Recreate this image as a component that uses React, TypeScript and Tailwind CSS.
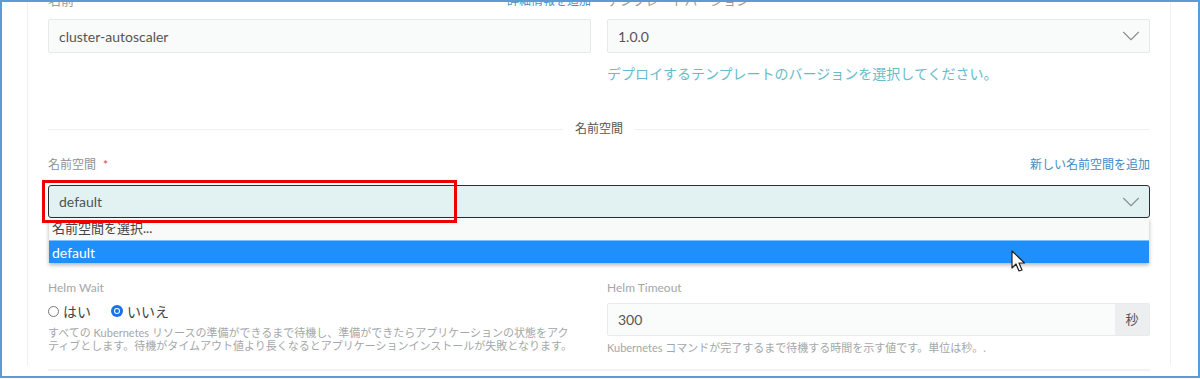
import { ChevronDown } from "lucide-react";

const font = { fontFamily: "Lato, 'Noto Sans CJK JP', sans-serif" };

function Chevron() {
  return <ChevronDown className="w-[30px] h-[30px] -mr-[7px] text-[#8a8f93]" strokeWidth={0.9} />;
}

function Cursor() {
  return (
    <svg width="16" height="24" viewBox="0 0 16 24" className="absolute z-30 left-[1011px] top-[250px]">
      <path d="M1 1 L1 18 L5 14 L8 21 L11 20 L8 13 L13.5 13 Z" fill="#fff" stroke="#222" strokeWidth="1.2" strokeLinejoin="round" />
    </svg>
  );
}

export default function App() {
  return (
    <div style={font} className="relative w-[1200px] h-[379px] overflow-hidden bg-white">
      <div className="h-[378px] border-2 border-[#5b9bd8] overflow-hidden">
        <div className="ml-[25px] mr-[27px] h-full border-l border-r border-[#eef0f1] px-[20px]">
          <div className="-mt-[11px] grid grid-cols-2 gap-4">
            {/* left column */}
            <div>
              <div className="flex justify-between items-center h-5 mb-2">
                <span className="text-[13px] text-[#9a9ea1]">名前</span>
                <span className="text-[12px] text-[#4a8fc4]">詳細情報を追加</span>
              </div>
              <div className="h-[34px] flex items-center px-[10px] bg-[#f9fafa] border border-[#e6e9ea] rounded-[2px] text-[14px] text-[#555]">
                cluster-autoscaler
              </div>
            </div>
            {/* right column */}
            <div>
              <div className="h-5 mb-2 flex items-center">
                <span className="text-[13px] text-[#9a9ea1]">テンプレートバージョン</span>
              </div>
              <div className="h-[34px] flex items-center justify-between px-[10px] bg-[#f9fafa] border border-[#e6e9ea] rounded-[2px] text-[14px] text-[#555]">
                <span>1.0.0</span>
                <Chevron />
              </div>
              <p className="mt-[11px] text-[14px] leading-5 text-[#66bccb]">
                デプロイするテンプレートのバージョンを選択してください。
              </p>
            </div>
          </div>

          {/* divider */}
          <div className="mt-[35px] flex items-center gap-3">
            <div className="flex-1 h-px bg-[#eef0f1]" />
            <span className="text-[12px] leading-5 text-[#555]">名前空間</span>
            <div className="flex-1 h-px bg-[#eef0f1]" />
          </div>

          {/* namespace */}
          <div className="mt-4 flex justify-between items-center h-5">
            <span className="text-[12px] text-[#8e9396]">
              名前空間 <span className="text-[#e2404a] ml-1">*</span>
            </span>
            <span className="text-[12px] text-[#3d8cc4]">新しい名前空間を追加</span>
          </div>
          <div className="relative mt-[10px]">
            <div className="h-[33px] flex items-center justify-between pl-[10px] pr-[10px] bg-[#e2f1f1] border-[1.5px] border-[#2b2f31] rounded-[3px] text-[14px] text-[#4e5457]">
              <span>default</span>
              <Chevron />
            </div>
            <div className="absolute z-20 left-[-6px] top-[-5px] w-[415px] h-[43px] border-[3px] border-[#ee0000]" />
            <div className="absolute left-px right-px top-full z-10 shadow-[0_2px_4px_rgba(0,0,0,0.3)]">
              <div className="h-[22px] flex items-center px-[3px] bg-[#f8f9f9] text-[13px] text-[#444]">
                名前空間を選択...
              </div>
              <div className="h-[23px] flex items-center px-[3px] bg-[#1e8ffb] border-t border-[#7cc0ff] text-[14px] text-white">
                default
              </div>
            </div>
          </div>

          {/* helm settings */}
          <div className="mt-[60px] grid grid-cols-2 gap-4">
            <div>
              <div className="h-5 flex items-center text-[12px] text-[#a3a7aa]">Helm Wait</div>
              <div className="mt-[3px] h-5 flex items-center gap-5 text-[14px] text-[#444]">
                <label className="flex items-center gap-1">
                  <span className="w-[11px] h-[11px] rounded-full border border-[#777] bg-white" />
                  はい
                </label>
                <label className="flex items-center gap-1">
                  <span className="w-[12px] h-[12px] rounded-full bg-[#1a73e8] flex items-center justify-center">
                    <span className="w-[6px] h-[6px] rounded-full bg-white flex items-center justify-center">
                      <span className="w-[4px] h-[4px] rounded-full bg-[#1a73e8]" />
                    </span>
                  </span>
                  いいえ
                </label>
              </div>
              <p className="mt-[5px] text-[11px] leading-[13px] text-[#a3a7aa] whitespace-nowrap">
                すべての Kubernetes リソースの準備ができるまで待機し、準備ができたらアプリケーションの状態をアク
                <br />
                ティブとします。待機がタイムアウト値より長くなるとアプリケーションインストールが失敗となります。
              </p>
            </div>
            <div>
              <div className="h-5 flex items-center text-[12px] text-[#a3a7aa]">Helm Timeout</div>
              <div className="mt-[5px] h-[33px] flex border border-[#e8eaeb] rounded-[2px]">
                <div className="flex-1 flex items-center px-[10px] bg-[#fafbfb] text-[14px] text-[#555]">300</div>
                <div className="w-[34px] flex items-center justify-center bg-[#eceeef] text-[13px] text-[#555]">秒</div>
              </div>
              <p className="mt-[4px] text-[11px] leading-4 text-[#a3a7aa]">
                Kubernetes コマンドが完了するまで待機する時間を示す値です。単位は秒。.
              </p>
            </div>
          </div>

          <div className="mt-[13px] h-[2px] bg-[#f0f2f3]" />
        </div>
      </div>
      <Cursor />
    </div>
  );
}
